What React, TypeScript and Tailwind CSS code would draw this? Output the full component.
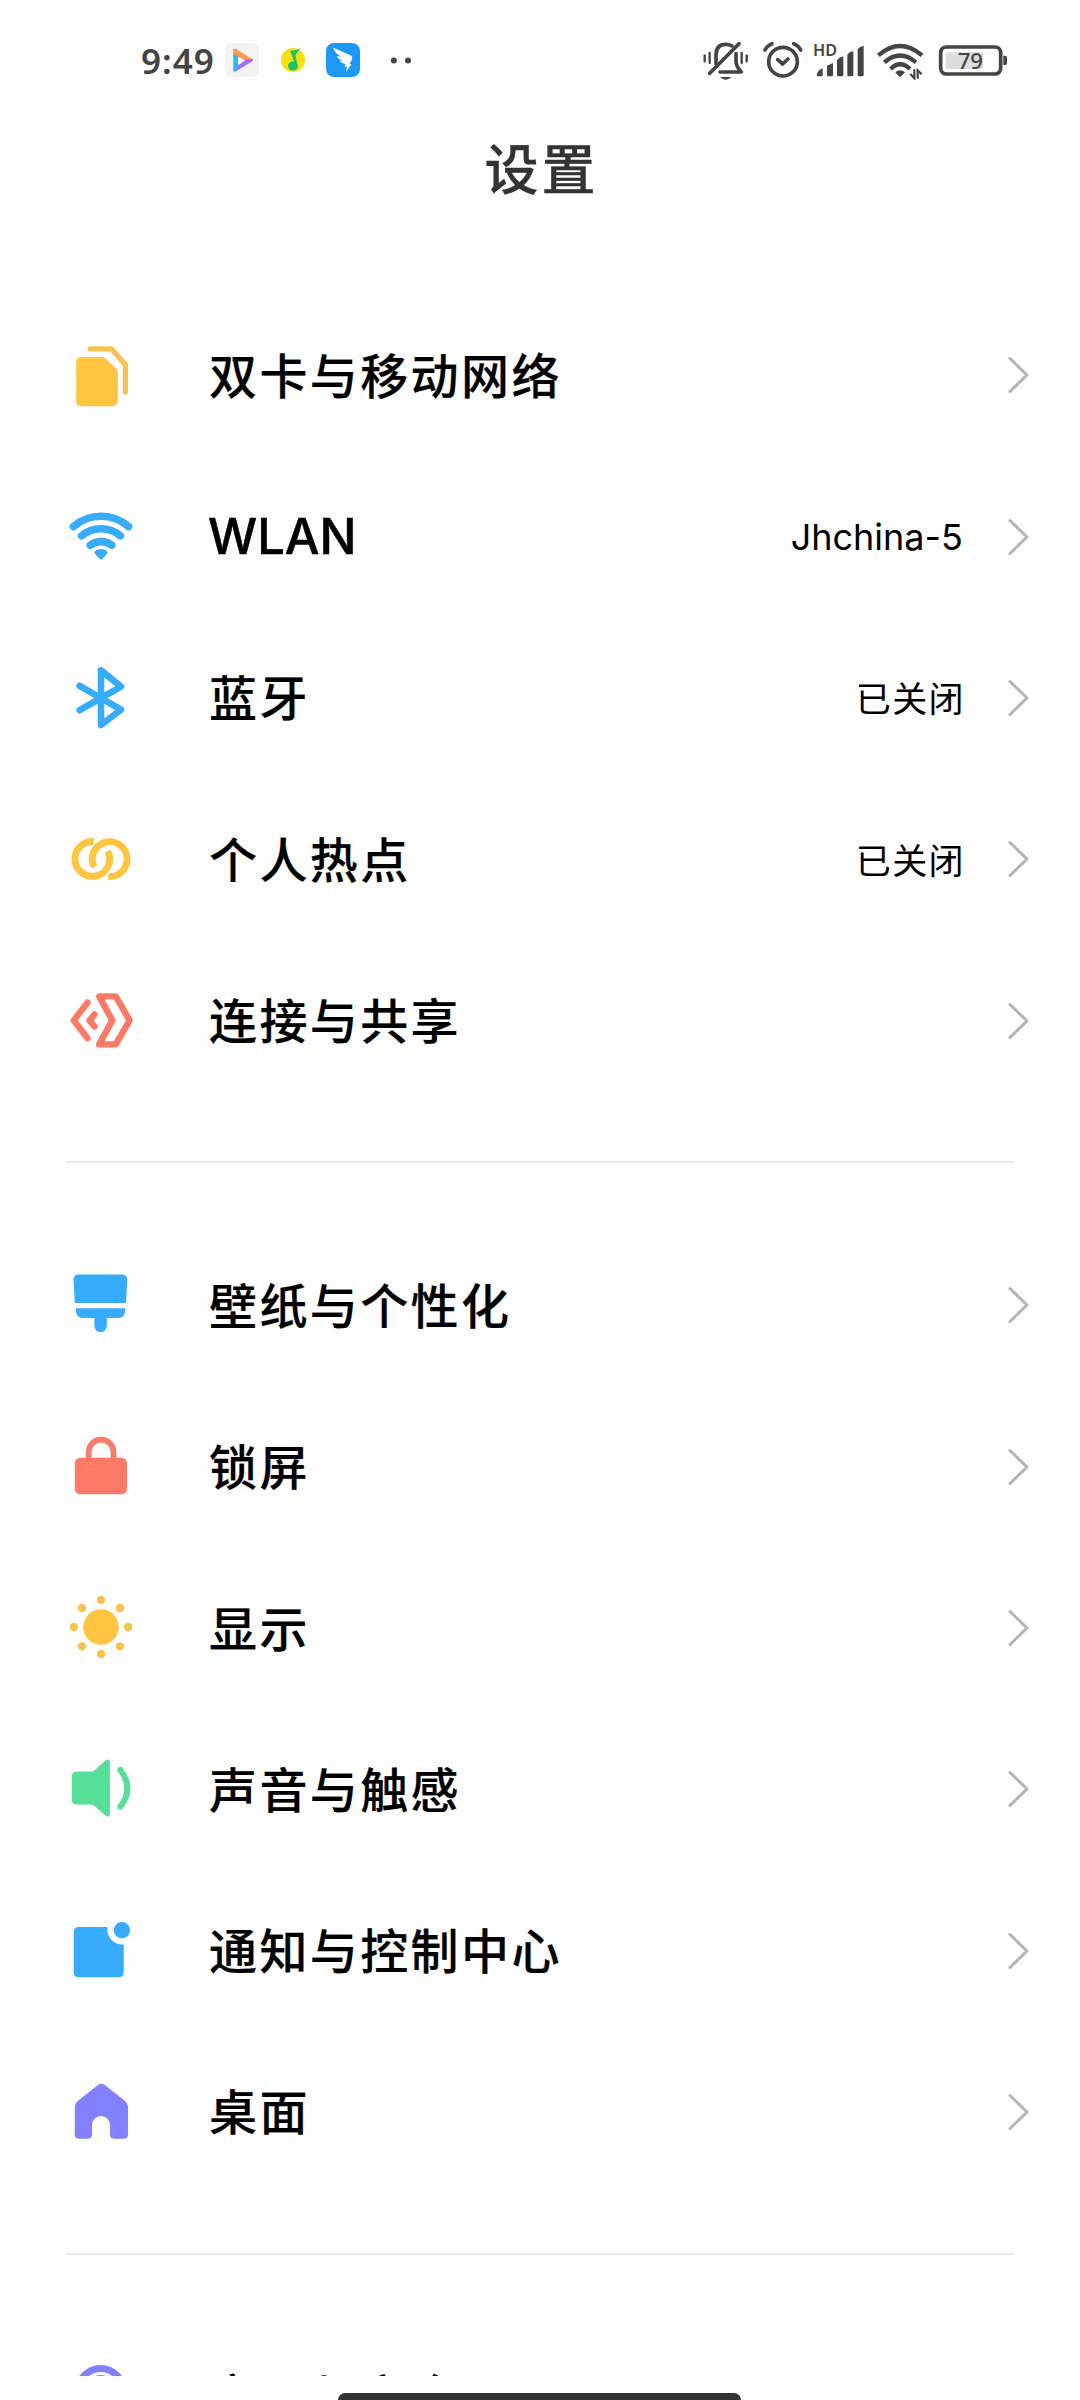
import type { ReactNode } from 'react';

type Item = { label: string; icon: ReactNode; value?: string; latin?: boolean };

const YELLOW = '#ffc540';
const BLUE = '#37abfc';
const RED = '#fb7a67';
const GREEN = '#57df9a';
const PURPLE = '#8280fc';
const DARK = '#444444';

function Icon({ children }: { children: ReactNode }) {
  return (
    <svg className="size-16 shrink-0 overflow-visible" viewBox="0 0 64 64" fill="none" strokeLinecap="round" strokeLinejoin="round">
      {children}
    </svg>
  );
}

const simIcon = (
  <Icon>
    <path d="M13.5 14H33.5Q36 14 37.8 15.8L48 25.2Q49.8 27 49.8 29.5V58Q49.8 63.2 44.5 63.2H13.5Q8.2 63.2 8.2 58V19.2Q8.2 14 13.5 14Z" fill={YELLOW} />
    <path d="M22.3 5.9H43.6L57.4 21.8V49" stroke="#f5c351" strokeWidth="5.2" />
  </Icon>
);

const wlanIcon = (
  <Icon>
    <g stroke={BLUE} strokeWidth="7.6">
      <path d="M5.4 21.6A42 42 0 0 1 60.6 21.6" />
      <path d="M13.6 30.8A30 30 0 0 1 52.4 30.8" />
      <path d="M22.2 40.2A18 18 0 0 1 43.8 40.2" />
    </g>
    <path d="M29.5 46.5Q33 44.8 36.5 46.5L37.8 47.5L33 52.8L28.2 47.5Z" fill={BLUE} stroke={BLUE} strokeWidth="3.5" />
  </Icon>
);

const bluetoothIcon = (
  <Icon>
    <path d="M11.6 19.8L53 43.6L33 59V4.4L53 20.6L11.6 44.2" stroke={BLUE} strokeWidth="6.6" />
  </Icon>
);

const hotspotIcon = (
  <Icon>
    <g stroke={YELLOW} strokeWidth="6.8" strokeLinecap="butt">
      <path d="M25.8 14.6A17.4 17.4 0 1 0 39.8 24" />
      <path d="M40.2 49.4A17.4 17.4 0 1 0 26.2 40" />
    </g>
  </Icon>
);

const shareIcon = (
  <Icon>
    <g stroke={RED} strokeWidth="6.4">
      <path d="M31.2 7.4H47.8L61.6 31.4L47.8 55.4H31.2L44.3 31.4Z" />
      <path d="M19.5 13.6L5.7 31.4L19.5 49.2" />
      <path d="M26.5 25.4L21.6 31.4L26.5 37.4" />
    </g>
  </Icon>
);

const brushIcon = (
  <Icon>
    <path d="M10.5 1.5H54Q59.3 1.5 59.2 7L58 30H6.8L5.6 7Q5.3 1.5 10.5 1.5Z" fill={BLUE} />
    <path d="M7.6 35.2H57.4Q57.4 45 50 45H38.8V53A6.2 6.2 0 0 1 26.4 53V45H15Q7.6 45 7.6 35.2Z" fill={BLUE} />
  </Icon>
);

const lockIcon = (
  <Icon>
    <path d="M20.7 25V17A12.4 12.4 0 0 1 45.5 17V25" stroke="#f57d6c" strokeWidth="5.8" />
    <rect x="6.8" y="22.7" width="52.2" height="36.6" rx="5.5" fill="#ff7a66" />
  </Icon>
);

const sunIcon = (
  <Icon>
    <circle cx="33" cy="31" r="17.8" fill={YELLOW} />
    <g fill="#f8c34c">
      <circle cx="33" cy="4" r="4.2" />
      <circle cx="33" cy="58" r="4.2" />
      <circle cx="5.8" cy="31" r="4.2" />
      <circle cx="60.1" cy="31" r="4.2" />
      <circle cx="14" cy="12" r="4.2" />
      <circle cx="52" cy="12" r="4.2" />
      <circle cx="14" cy="50.4" r="4.2" />
      <circle cx="52" cy="50.4" r="4.2" />
    </g>
  </Icon>
);

const soundIcon = (
  <Icon>
    <path d="M9 14.6H22.5Q25 14.6 26.8 13L37.5 3.4Q41.9 1 41.9 5.5V56.5Q41.9 61 37.5 58.4L26.8 49.2Q25 47.6 22.5 47.6H9Q3.8 47.6 3.8 42.4V19.8Q3.8 14.6 9 14.6Z" fill={GREEN} />
    <path d="M52.4 13Q66.4 31.2 52.4 49.6" stroke={GREEN} strokeWidth="6" />
  </Icon>
);

const noticeIcon = (
  <Icon>
    <path d="M11 8H39.6A14.8 14.8 0 0 0 55.7 25.4V53Q55.7 58.3 50.4 58.3H11Q5.7 58.3 5.7 53V13.3Q5.7 8 11 8Z" fill={BLUE} />
    <circle cx="53.9" cy="11.3" r="8.2" fill={BLUE} />
  </Icon>
);

const homeIcon = (
  <Icon>
    <path d="M30 5Q33.4 2.4 36.8 5L56.5 20.5Q60 23.5 60 28V54.5Q60 58.7 55.5 58.7H46.5Q42 58.7 42 54.5V45A9 9 0 0 0 24 45V54.5Q24 58.7 19.5 58.7H11.3Q6.8 58.7 6.8 54.5V28Q6.8 23.5 10.3 20.5Z" fill={PURPLE} />
  </Icon>
);

const securityIcon = (
  <Icon>
    <circle cx="32.6" cy="26.2" r="22.6" stroke={PURPLE} strokeWidth="7" />
    <circle cx="32.6" cy="19.5" r="9.8" fill="#9a98b8" />
  </Icon>
);

const network: Item[] = [
  { label: '双卡与移动网络', icon: simIcon },
  { label: 'WLAN', icon: wlanIcon, value: 'Jhchina-5', latin: true },
  { label: '蓝牙', icon: bluetoothIcon, value: '已关闭' },
  { label: '个人热点', icon: hotspotIcon, value: '已关闭' },
  { label: '连接与共享', icon: shareIcon },
];

const personal: Item[] = [
  { label: '壁纸与个性化', icon: brushIcon },
  { label: '锁屏', icon: lockIcon },
  { label: '显示', icon: sunIcon },
  { label: '声音与触感', icon: soundIcon },
  { label: '通知与控制中心', icon: noticeIcon },
  { label: '桌面', icon: homeIcon },
];

const security: Item[] = [{ label: '密码与安全', icon: securityIcon }];

function Row({ item }: { item: Item }) {
  return (
    <div className="flex h-[161.3px] items-center pl-[68px] pr-[50px]">
      {item.icon}
      {item.latin ? (
        <span className="ml-[76px] font-[Inter,sans-serif] text-[49px] leading-none font-medium [-webkit-text-stroke:0.5px_#000]">
          {item.label}
        </span>
      ) : (
        <span className="ml-[77px] pb-[5px] text-[48px] leading-none font-medium tracking-[2.4px] [-webkit-text-stroke:0.2px_#000]">
          {item.label}
        </span>
      )}
      <div className="ml-auto flex items-center">
        {item.value &&
          (item.latin ? (
            <span className="mr-[43px] font-[Inter,sans-serif] text-[36px] leading-none">{item.value}</span>
          ) : (
            <span className="mr-[41px] pb-[2px] text-[35px] leading-none tracking-[1.4px]">{item.value}</span>
          ))}
        <svg className="h-10 w-6" viewBox="0 0 24 40" fill="none" stroke="#b4b4b4" strokeWidth="3" strokeLinecap="round" strokeLinejoin="round">
          <path d="M4 3.5L21 20L4 36.5" />
        </svg>
      </div>
    </div>
  );
}

function Section({ items }: { items: Item[] }) {
  return (
    <div>
      {items.map((item) => (
        <Row key={item.label} item={item} />
      ))}
    </div>
  );
}

function Divider() {
  return <div className="mt-[60px] mr-[66px] mb-[61.6px] ml-[66px] h-[2px] bg-[#e9e9e9]" />;
}

function StatusBar() {
  return (
    <div className="flex h-[120px] shrink-0 items-center pl-[141px]">
      <span className="w-[84px] font-['Noto_Sans',sans-serif] text-[35px] leading-none font-semibold tracking-[1px] text-[#444444]">9:49</span>

      {/* 通知图标 */}
      <svg className="size-[34px]" viewBox="0 0 34 34">
        <rect width="34" height="34" rx="7" fill="#f3f3f4" />
        <path d="M8.5 6V28L14.5 24V14Z" fill="#29b6f6" />
        <path d="M8.5 6Q10 5 12 6.5L27.5 16.5L22 18.5L8.5 11Z" fill="#ff9a4d" />
        <path d="M28 16Q28.5 17.5 27 18.5L10.5 28.5Q8.5 29 8.5 27L20.5 16.5Z" fill="#a26bf5" />
        <path d="M8.5 11L13 14V25L9.5 28.6Q8.5 28.5 8.5 27Z" fill="#29b6f6" />
        <path d="M13 14L19.5 17.7L13 21.8Z" fill="#f5f5f6" />
      </svg>
      <svg className="ml-[22px] size-6" viewBox="0 0 24 24">
        <circle cx="12" cy="12" r="12" fill="#f9e00f" />
        <ellipse cx="12" cy="18" rx="5" ry="4.6" fill="#1fc06c" />
        <path d="M9 3L17 1.5L19.5 0L14.5 7L16.5 18H14.5L10.5 6Z" fill="#1fc06c" />
      </svg>
      <svg className="ml-[21px] size-[34px]" viewBox="0 0 34 34">
        <rect width="34" height="34" rx="8" fill="#1d98f6" />
        <path d="M7 4.5L24 12Q27 13.5 26 16.5L23.5 21H25.5L20 29L21 23.5H18.5L19.5 21Q15 20 13.5 17.5L17 17.8Q12 16 10.8 13L15 13.6Q9.5 11 7 4.5Z" fill="#ffffff" />
      </svg>
      <svg className="ml-[28px] h-2 w-6" viewBox="0 0 24 8" fill={DARK}>
        <circle cx="5.8" cy="4.5" r="3" />
        <circle cx="20" cy="4.5" r="3" />
      </svg>

      {/* 静音 */}
      <svg className="ml-[290px] h-10 w-12" viewBox="36 60 144 120" fill="none" stroke={DARK} strokeWidth="11" strokeLinecap="round">
        <path d="M59 160L147 71" />
        <path d="M78 132V106Q78 73 107 73Q118 73 126 78" />
        <path d="M138 101V125Q138 138 154 156H90" strokeLinejoin="round" />
        <path d="M90 171H124Q107 188 90 171Z" fill={DARK} stroke="none" />
        <g strokeWidth="7">
          <path d="M44 106V124M59 99V129M155 99V129M170 106V124" />
        </g>
      </svg>
      {/* 闹钟 */}
      <svg className="ml-[12px] h-10 w-[42px]" viewBox="216 60 126 120" fill="none" stroke={DARK} strokeWidth="11" strokeLinecap="round" strokeLinejoin="round">
        <circle cx="279" cy="125" r="43" />
        <path d="M263 119L278 132L294 117" />
        <path d="M225 90Q231 78 246 71M311 71Q326 78 332 90" />
      </svg>
      {/* 信号 */}
      <svg className="ml-[8px] h-10 w-[54px]" viewBox="366 60 162 120" fill={DARK}>
        <text x="369" y="109" fontFamily="Noto Sans, sans-serif" fontWeight="600" fontSize="47" textLength="72" lengthAdjust="spacingAndGlyphs">HD</text>
        <path d="M380 165Q382 152 398 145V165Q398 169 394 169H384Q380 169 380 165Z" />
        <path d="M411 137L429 129V165Q429 169 425 169H415Q411 169 411 165Z" />
        <path d="M441 120Q449 111 460 109V165Q460 169 456 169H445Q441 169 441 165Z" />
        <path d="M472 104Q479 95 490 93V165Q490 169 486 169H476Q472 169 472 165Z" />
        <path d="M503 87Q509 79 521 77V165Q521 169 517 169H507Q503 169 503 165Z" />
      </svg>
      {/* Wi-Fi */}
      <svg className="ml-[10px] h-10 w-12" viewBox="558 60 144 120" fill="none" stroke={DARK} strokeWidth="13">
        <path d="M565 106Q630 50 696 106" />
        <path d="M583 127Q630 86 678 127" />
        <path d="M602 147Q630 119 660 147" />
        <path d="M616 157Q630 145 645 157L630 172Z" fill={DARK} stroke="none" />
        <g strokeWidth="6.5">
          <path d="M673 148V175L661 162" />
          <path d="M683 176V151L695 163" />
        </g>
      </svg>
      {/* 电量 */}
      <svg className="ml-[14px] h-10 w-[70px]" viewBox="744 60 210 120">
        <rect x="752" y="81" width="180" height="81" rx="17" fill="none" stroke={DARK} strokeWidth="11" />
        <rect x="767" y="97" width="112" height="50" rx="6" fill="#dddddd" />
        <path d="M940 107H945Q951 107 951 113V129Q951 135 945 135H940Z" fill={DARK} />
        <text x="841" y="147" textAnchor="middle" fontFamily="Noto Sans, sans-serif" fontWeight="500" fontSize="67" textLength="76" lengthAdjust="spacingAndGlyphs" fill={DARK}>79</text>
      </svg>
    </div>
  );
}

export default function App() {
  return (
    <div className="relative h-[2400px] w-[1080px] overflow-hidden bg-[#fefefe] font-['Noto_Sans_CJK_SC',sans-serif] text-black">
      <div className="flex h-[2376px] flex-col overflow-hidden">
        <StatusBar />
        <h1 className="h-[174.7px] shrink-0 pt-[20px] pl-[3px] text-center text-[54px] leading-none font-medium tracking-[3px] text-[#333333] [-webkit-text-stroke:0.3px_#333]">
          设置
        </h1>
        <div className="shrink-0">
          <Section items={network} />
          <Divider />
          <Section items={personal} />
          <Divider />
          <Section items={security} />
        </div>
      </div>

      {/* 底部手势条 */}
      <div className="absolute top-[2393px] left-[338px] h-[14px] w-[403px] rounded-[7px] bg-[#333333]" />
    </div>
  );
}
